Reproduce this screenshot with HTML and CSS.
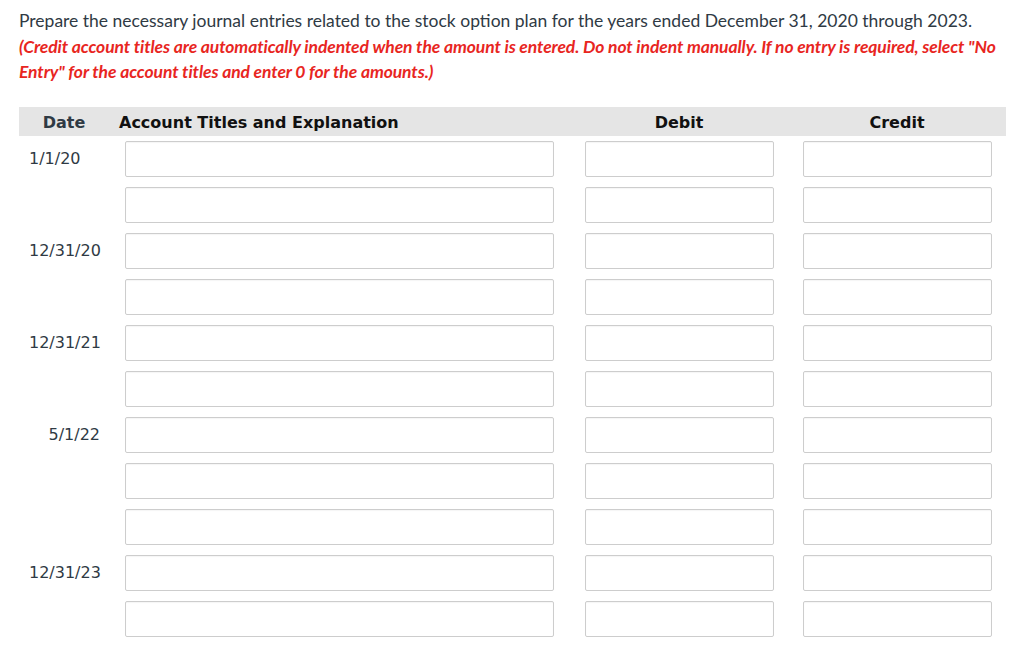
FILE: index.html
```html
<!DOCTYPE html>
<html lang="en">
<head>
    <meta charset="UTF-8">
    <title>Journal Entries</title>
    <link rel="stylesheet" href="styles.css">
</head>
<body>

    <!-- Instructions -->
    <div class="instructions">
        <p class="prompt">Prepare the necessary journal entries related to the stock option plan for the years ended December 31, 2020 through 2023.</p>
        <p class="note">(Credit account titles are automatically indented when the amount is entered. Do not indent manually. If no entry is required, select "No Entry" for the account titles and enter 0 for the amounts.)</p>
    </div>

    <!-- Journal table -->
    <div class="journal">
        <div class="journal-head">
            <div class="col-date">Date</div>
            <div class="col-account">Account Titles and Explanation</div>
            <div class="col-amount">Debit</div>
            <div class="col-amount">Credit</div>
        </div>

        <div class="journal-row">
            <div class="col-date left">1/1/20</div>
            <div class="col-account"><input type="text" class="field account-field"></div>
            <div class="col-amount"><input type="text" class="field amount-field"></div>
            <div class="col-amount"><input type="text" class="field amount-field"></div>
        </div>
        <div class="journal-row">
            <div class="col-date"></div>
            <div class="col-account"><input type="text" class="field account-field"></div>
            <div class="col-amount"><input type="text" class="field amount-field"></div>
            <div class="col-amount"><input type="text" class="field amount-field"></div>
        </div>

        <div class="journal-row">
            <div class="col-date">12/31/20</div>
            <div class="col-account"><input type="text" class="field account-field"></div>
            <div class="col-amount"><input type="text" class="field amount-field"></div>
            <div class="col-amount"><input type="text" class="field amount-field"></div>
        </div>
        <div class="journal-row">
            <div class="col-date"></div>
            <div class="col-account"><input type="text" class="field account-field"></div>
            <div class="col-amount"><input type="text" class="field amount-field"></div>
            <div class="col-amount"><input type="text" class="field amount-field"></div>
        </div>

        <div class="journal-row">
            <div class="col-date">12/31/21</div>
            <div class="col-account"><input type="text" class="field account-field"></div>
            <div class="col-amount"><input type="text" class="field amount-field"></div>
            <div class="col-amount"><input type="text" class="field amount-field"></div>
        </div>
        <div class="journal-row">
            <div class="col-date"></div>
            <div class="col-account"><input type="text" class="field account-field"></div>
            <div class="col-amount"><input type="text" class="field amount-field"></div>
            <div class="col-amount"><input type="text" class="field amount-field"></div>
        </div>

        <div class="journal-row">
            <div class="col-date">5/1/22</div>
            <div class="col-account"><input type="text" class="field account-field"></div>
            <div class="col-amount"><input type="text" class="field amount-field"></div>
            <div class="col-amount"><input type="text" class="field amount-field"></div>
        </div>
        <div class="journal-row">
            <div class="col-date"></div>
            <div class="col-account"><input type="text" class="field account-field"></div>
            <div class="col-amount"><input type="text" class="field amount-field"></div>
            <div class="col-amount"><input type="text" class="field amount-field"></div>
        </div>
        <div class="journal-row">
            <div class="col-date"></div>
            <div class="col-account"><input type="text" class="field account-field"></div>
            <div class="col-amount"><input type="text" class="field amount-field"></div>
            <div class="col-amount"><input type="text" class="field amount-field"></div>
        </div>

        <div class="journal-row">
            <div class="col-date">12/31/23</div>
            <div class="col-account"><input type="text" class="field account-field"></div>
            <div class="col-amount"><input type="text" class="field amount-field"></div>
            <div class="col-amount"><input type="text" class="field amount-field"></div>
        </div>
        <div class="journal-row">
            <div class="col-date"></div>
            <div class="col-account"><input type="text" class="field account-field"></div>
            <div class="col-amount"><input type="text" class="field amount-field"></div>
            <div class="col-amount"><input type="text" class="field amount-field"></div>
        </div>
    </div>

</body>
</html>
```

FILE: styles.css
```css
body {
    margin: 0;
    padding: 8px 18px 0 19px;
    background-color: #ffffff;
    font-family: Lato, "Liberation Sans", sans-serif;
    color: #2f3a44;
}

/* Instructions */
.instructions p {
    margin: 0;
    font-size: 17.5px;
    line-height: 25.5px;
}

.note {
    color: #e8261f;
    font-weight: bold;
    font-style: italic;
    letter-spacing: -0.1px;
}

/* Journal table */
.journal {
    margin-top: 22px;
    width: 987px;
}

.journal-head,
.journal-row {
    display: grid;
    grid-template-columns: 90px 461px 218px 218px;
    align-items: center;
}

.journal-head {
    height: 29px;
    background-color: #e5e5e5;
    font-family: "DejaVu Sans", Verdana, sans-serif;
    font-weight: bold;
    font-size: 16px;
    color: #111;
}

.journal-head > div {
    padding-top: 2px;
}

.journal-head .col-date {
    text-align: center;
    padding-left: 0;
    padding-right: 0;
}

.journal-head .col-account {
    padding-left: 10px;
}

.journal-head .col-amount {
    text-align: center;
}

.journal-row {
    height: 46px;
}

.col-date {
    font-family: "DejaVu Sans", Verdana, sans-serif;
    font-size: 16px;
    color: #2f3a44;
    text-align: right;
    padding: 0 9px 0 10px;
}

.col-date.left {
    text-align: left;
}

.journal-row .col-account {
    padding-left: 16px;
}

.journal-row .col-amount {
    display: flex;
    justify-content: center;
}

/* Input boxes */
.field {
    box-sizing: border-box;
    height: 36px;
    margin: 0;
    border: 1px solid #cdcdcd;
    border-radius: 2px;
    background-color: #fff;
    box-shadow: inset 0 1px 1px rgba(0, 0, 0, 0.04);
}

.account-field {
    width: 429px;
}

.amount-field {
    width: 189px;
}
```
